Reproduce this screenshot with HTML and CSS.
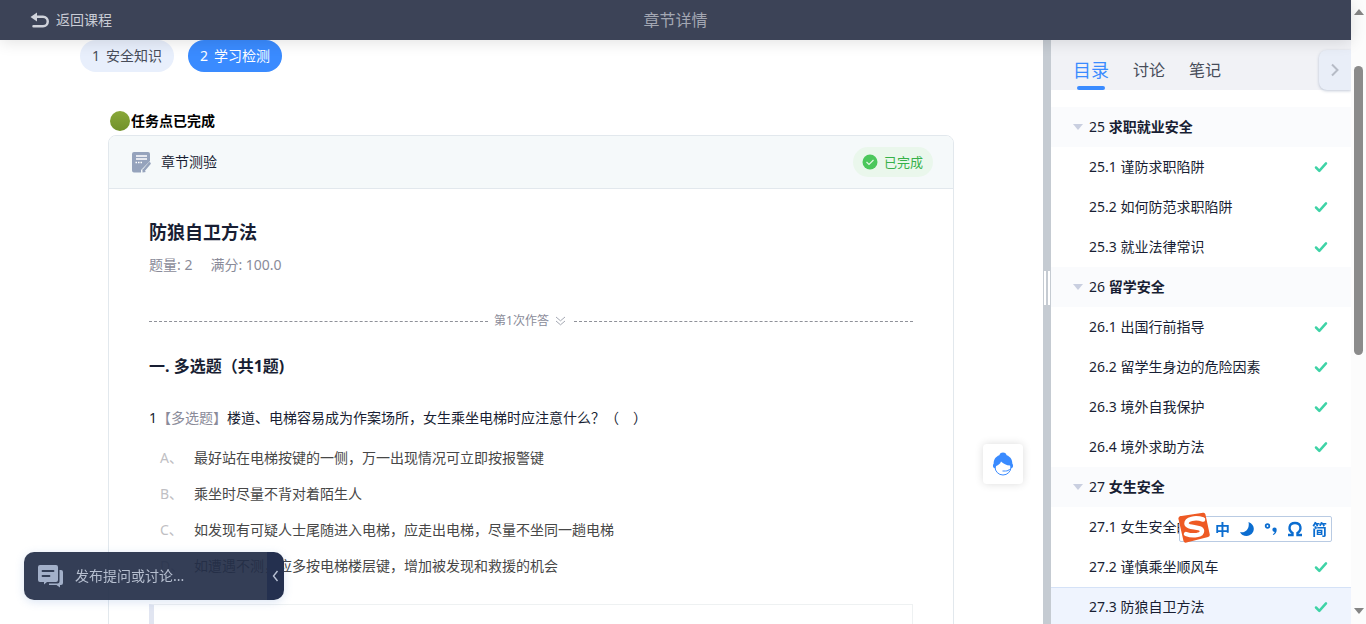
FILE: index.html
```html
<!DOCTYPE html>
<html lang="zh-CN">
<head>
<meta charset="utf-8">
<title>章节详情</title>
<link rel="stylesheet" href="styles.css">
</head>
<body>
<svg class="defs" aria-hidden="true">
  <symbol id="tick" viewBox="0 0 14 12"><path d="M2 6.500 5.300 9.800 12 2.400" fill="none" stroke="#3ed3a6" stroke-width="2.500" stroke-linecap="round" stroke-linejoin="round"/></symbol>
</svg>
<div class="shell">
  <div class="app">
    <header class="topbar">
      <a class="back" href="#">
        <svg width="20" height="16" viewBox="0 0 20 16"><path d="M0.500 5 7 0.500v3h6a6 6 0 0 1 0 12H3.500a1.200 1.200 0 0 1 0-2.500H13a3.500 3.500 0 0 0 0-7H7v3.500z" fill="#d0d3db"/></svg>
        <span>返回课程</span>
      </a>
      <h1 class="topbar-title">章节详情</h1>
    </header>
    <div class="body">
      <main class="content">
        <nav class="steps">
          <a class="step" href="#"><span>1</span><span>安全知识</span></a>
          <a class="step step-active" href="#"><span>2</span><span>学习检测</span></a>
        </nav>
        <div class="task">
          <div class="task-state"><i class="dot"></i>任务点已完成</div>
          <section class="card">
            <div class="card-head">
              <svg width="20" height="21" viewBox="0 0 20 21"><path d="M2 0h14a2 2 0 0 1 2 2v7L9 18v2.500H2a2 2 0 0 1-2-2V2a2 2 0 0 1 2-2z" fill="#95a3bc"/><path d="M4 4h11M4 7h11" stroke="#fff" stroke-width="1.300"/><path d="M3.500 10.500h1.500M6 10.500h1.500M8.500 10.500H10" stroke="#fff" stroke-width="1.500"/><path d="M17.500 11.500 12 18" stroke="#95a3bc" stroke-width="2.600" stroke-linecap="round"/><path d="M10.500 17 14 20 10.500 20.500z" fill="#95a3bc"/></svg>
              <span class="card-name">章节测验</span>
              <span class="badge"><svg width="16" height="16" viewBox="0 0 16 16"><circle cx="8" cy="8" r="7.500" fill="#4cc75c"/><path d="M4.500 8 7 10.500 11.500 6" fill="none" stroke="#e3f7e5" stroke-width="1.200"/></svg>已完成</span>
            </div>
            <div class="paper">
              <h2 class="paper-title">防狼自卫方法</h2>
              <p class="paper-meta"><span>题量: 2</span><span>满分: 100.0</span></p>
              <div class="attempt"><span>第1次作答</span><svg width="11" height="10" viewBox="0 0 11 10"><path d="M1 1l4.500 3.800L10 1M1 5l4.500 3.800L10 5" fill="none" stroke="#a4a8b3"/></svg></div>
              <h3 class="section-title">一. 多选题（共1题)</h3>
              <p class="question">1<span class="kind">【多选题】</span>楼道、电梯容易成为作案场所，女生乘坐电梯时应注意什么？（　）</p>
              <ul class="options">
                <li><span class="letter">A、</span>最好站在电梯按键的一侧，万一出现情况可立即按报警键</li>
                <li><span class="letter">B、</span>乘坐时尽量不背对着陌生人</li>
                <li><span class="letter">C、</span>如发现有可疑人士尾随进入电梯，应走出电梯，尽量不坐同一趟电梯</li>
                <li><span class="letter">D、</span>如遭遇不测，应多按电梯楼层键，增加被发现和救援的机会</li>
              </ul>
              <div class="answer"></div>
            </div>
          </section>
        </div>
      </main>
      <div class="divider"><i class="grip"></i></div>
      <aside class="side">
        <div class="side-tabs">
          <a class="tab tab-active" href="#">目录</a>
          <a class="tab" href="#">讨论</a>
          <a class="tab" href="#">笔记</a>
          <button class="fold" aria-label="收起"><svg width="10" height="14" viewBox="0 0 10 14"><path d="M2 1.500 7.500 7 2 12.500" fill="none" stroke="#b6bbc6" stroke-width="2"/></svg></button>
        </div>
        <ul class="toc">
          <li class="chapter"><i class="caret"></i><span>25 <b>求职就业安全</b></span></li>
          <li class="lesson"><a href="#">25.1 谨防求职陷阱</a><svg width="14" height="12"><use href="#tick"/></svg></li>
          <li class="lesson"><a href="#">25.2 如何防范求职陷阱</a><svg width="14" height="12"><use href="#tick"/></svg></li>
          <li class="lesson"><a href="#">25.3 就业法律常识</a><svg width="14" height="12"><use href="#tick"/></svg></li>
          <li class="chapter"><i class="caret"></i><span>26 <b>留学安全</b></span></li>
          <li class="lesson"><a href="#">26.1 出国行前指导</a><svg width="14" height="12"><use href="#tick"/></svg></li>
          <li class="lesson"><a href="#">26.2 留学生身边的危险因素</a><svg width="14" height="12"><use href="#tick"/></svg></li>
          <li class="lesson"><a href="#">26.3 境外自我保护</a><svg width="14" height="12"><use href="#tick"/></svg></li>
          <li class="lesson"><a href="#">26.4 境外求助方法</a><svg width="14" height="12"><use href="#tick"/></svg></li>
          <li class="chapter"><i class="caret"></i><span>27 <b>女生安全</b></span></li>
          <li class="lesson"><a href="#">27.1 女生安全的</a><svg width="14" height="12"><use href="#tick"/></svg></li>
          <li class="lesson"><a href="#">27.2 谨慎乘坐顺风车</a><svg width="14" height="12"><use href="#tick"/></svg></li>
          <li class="lesson lesson-current"><a href="#">27.3 防狼自卫方法</a><svg width="14" height="12"><use href="#tick"/></svg></li>
        </ul>
      </aside>
    </div>
  </div>
  <div class="scroll"><i class="arrow-up"></i><i class="thumb"></i><i class="arrow-down"></i></div>
</div>

<button class="helper" aria-label="客服"><svg width="22" height="24" viewBox="0 0 22 24"><path d="M3 12v3a8 8 0 0 0 16 0v-3" fill="#fff" stroke="#3a8bff" stroke-width="1"/><path d="M7.300 3.200C8 1.200 9.300.5 11 .5s3 .7 3.700 2.700C18.500 4.600 20.500 8 20.300 11.500c1 .8 1 3.500 0 4.300l-1.500.6c0-1.400-.2-2.200-.8-3-3.400-.2-6.800-1.600-9-4-.8 2.500-2.700 3.600-4.800 4.500-.5.800-.8 1.500-.8 2.500l-1.700-.6c-1-.8-1-3.500 0-4.300C1.500 8 3.500 4.600 7.300 3.200z" fill="#3a8bff"/><path d="M10.500 19h3c2 0 3.300-.6 4.300-2" fill="none" stroke="#3a8bff"/></svg></button>

<div class="discuss">
  <button class="discuss-open"><svg width="26" height="23" viewBox="0 0 26 23"><path d="M2 0h16a2 2 0 0 1 2 2v13a2 2 0 0 1-2 2H9l-3 2.500V17H2a2 2 0 0 1-2-2V2a2 2 0 0 1 2-2z" fill="#a3b0c9"/><path d="M4.500 6h11M4.500 11h7" stroke="#333e56" stroke-width="1.800" stroke-linecap="round"/><path d="M21.500 5H23a2 2 0 0 1 2 2v11a2 2 0 0 1-2 2h-1v2.500L18.500 20H11v-1.500h8.500a2 2 0 0 0 2-2z" fill="#a3b0c9"/></svg><span>发布提问或讨论...</span></button>
  <button class="discuss-fold" aria-label="收起"><svg width="7" height="12" viewBox="0 0 7 12"><path d="M5.500 1 1.500 6l4 5" fill="none" stroke="#b6bfd2" stroke-width="1.400"/></svg></button>
</div>

<div class="ime">
  <svg class="ime-logo" width="32" height="32" viewBox="0 0 32 32"><path d="M3.500 4 25 .8a2 2 0 0 1 2.400 1.500l4.300 20a2.300 2.300 0 0 1-1.600 2.700L8.500 30.500a2.400 2.400 0 0 1-3-1.500L.6 7.500A2.600 2.600 0 0 1 3.500 4z" fill="#ee5a24"/><path d="M25 7.500C17 5 8.500 7 8.500 11.500c0 5 15.500 2.500 15.500 7.500 0 4.500-9 5.500-16 3" fill="none" stroke="#fff" stroke-width="4.500" stroke-linecap="round"/></svg>
  <span>中</span>
  <svg width="16" height="16" viewBox="0 0 16 16"><path d="M9.500 1C18 4 15.500 15 7.500 15 4.500 15 2 13.500 1 11c5 1.500 10-3 8.500-10z" fill="#0b6dd0"/></svg>
  <svg width="14" height="16" viewBox="0 0 14 16"><circle cx="3.500" cy="5" r="1.800" fill="none" stroke="#0b6dd0" stroke-width="1.800"/><path d="M10.500 6.500a2.200 2.200 0 0 1 2.200 2.300c0 2.500-1.200 4.500-3.500 5.200l-.4-.9c1.200-.6 1.700-1.300 1.800-2.200a2.200 2.200 0 0 1-.1-4.400z" fill="#0b6dd0"/></svg>
  <svg width="16" height="16" viewBox="0 0 16 16"><path d="M1 14h4.500v-2C1 9 1.500 2 8 2s7 7 2.500 10v2H15" fill="none" stroke="#0b6dd0" stroke-width="2.400"/></svg>
  <span>简</span>
</div>
</body>
</html>
```
FILE: styles.css
```css
* { box-sizing: border-box; }
body, h1, h2, h3, p, ul { margin: 0; padding: 0; }
ul { list-style: none; }
a { color: inherit; text-decoration: none; }
button { border: 0; padding: 0; font: inherit; color: inherit; cursor: pointer; }
svg { flex: none; display: block; }
body {
  font-family: "Noto Sans", "Noto Sans CJK SC", sans-serif;
  font-size: 14px;
  line-height: 20px;
  color: #181e33;
  background: #fff;
  overflow: hidden;
}
.defs { position: absolute; width: 0; height: 0; }
.shell { display: flex; height: 100vh; }
.app { flex: 1; min-width: 0; display: flex; flex-direction: column; }

.topbar {
  position: relative;
  z-index: 2;
  flex: none;
  height: 40px;
  display: grid;
  grid-template-columns: 1fr auto 1fr;
  align-items: center;
  padding: 0 30px;
  background: #3c4357;
  box-shadow: 0 2px 16px rgba(0, 0, 0, .12);
}
.back { display: flex; align-items: center; gap: 6px; color: #c9ccd5; }
.topbar-title { font-size: 16px; font-weight: 400; color: #a3a7b3; }

.body { flex: 1; min-height: 0; display: flex; }
.content { flex: 1; min-width: 0; overflow: hidden; }
.steps { display: flex; gap: 14px; padding-left: 80px; }
.step {
  display: flex;
  gap: 6px;
  padding: 6px 12px;
  border-radius: 16px;
  background: #e8effc;
  color: #474c59;
}
.step-active { background: #3a8bff; color: #fff; }

.task { padding: 39px 89px 0 108px; }
.task-state { display: flex; align-items: center; padding-left: 2px; font-weight: 700; color: #000; }
.dot { width: 20px; height: 20px; margin-right: 1px; border-radius: 50%; background: linear-gradient(#89a83a, #71912a); }
.card { margin-top: 4px; border: 1px solid #e2e8ed; border-radius: 8px; overflow: hidden; }
.card-head {
  display: flex;
  align-items: center;
  height: 53px;
  padding: 0 20px 0 23px;
  background: #f5f9fa;
  border-bottom: 1px solid #e2e8ed;
}
.card-name { margin-left: 9px; }
.badge {
  display: flex;
  align-items: center;
  gap: 6px;
  margin-left: auto;
  padding: 5px 10px 5px 9px;
  border-radius: 15px;
  background: #eaf7ec;
  color: #36b249;
  font-size: 13px;
}
.paper { padding: 29px 40px 0; }
.paper-title { font-size: 18px; line-height: 28px; font-weight: 700; }
.paper-meta { display: flex; gap: 18px; margin-top: 9px; color: #8a8b99; }
.attempt {
  display: flex;
  align-items: center;
  gap: 6px;
  margin-top: 36px;
  font-size: 12px;
  color: #8a8b99;
}
.attempt::before, .attempt::after { content: ""; flex: 1; border-top: 1px dashed #8f9199; }
.attempt::after { margin-left: 2px; }
.section-title { margin-top: 23px; font-size: 16px; line-height: 24px; font-weight: 700; }
.question { margin-top: 28px; line-height: 24px; }
.kind { color: #8a8b99; }
.options { margin-top: 10px; line-height: 36px; color: #474747; }
.options li { display: flex; }
.letter { width: 45px; padding-left: 11px; color: #bfbfc4; }
.answer { height: 80px; margin-top: 20px; border: 1px solid #eef1f2; border-left: 5px solid #e1e5f1; }

.divider { flex: none; width: 8px; display: flex; background: #c5cbd2; }
.grip { width: 8px; height: 34px; margin-top: 231px; background: linear-gradient(90deg, #c5cbd2 1px, #fff 1px 3px, #c5cbd2 3px 5px, #fff 5px 7px, #c5cbd2 7px); }

.side { flex: none; width: 300px; overflow: hidden; }
.side-tabs { display: flex; align-items: flex-start; gap: 24px; height: 50px; padding-left: 22px; background: #f1f2f6; }
.tab { position: relative; margin-top: 10px; font-size: 16px; line-height: 40px; color: #474c59; }
.tab-active { font-size: 18px; color: #3a8bff; }
.tab-active::after { content: ""; position: absolute; left: 4px; right: 4px; bottom: 0; height: 4px; border-radius: 2px; background: #3a8bff; }
.fold {
  display: flex;
  align-items: center;
  width: 32px;
  height: 40px;
  margin: 10px 0 0 auto;
  padding-left: 11px;
  border-radius: 8px 0 0 8px;
  background: #e9eef8;
  box-shadow: 0 1px 3px rgba(80, 100, 140, .35);
}
.toc { padding-top: 17px; }
.chapter, .lesson { display: flex; align-items: center; height: 40px; }
.chapter { padding-left: 22px; gap: 8px; background: #fafbfd; }
.caret { border: solid transparent; border-width: 6px 5px 0; border-top-color: #c9cfe0; margin-right: -2px; }
.lesson { justify-content: space-between; padding: 0 23px 0 38px; }
.lesson-current { background: #eff4fe; box-shadow: inset 0 1px #d5e2f7; }

.scroll { flex: none; width: 15px; display: flex; flex-direction: column; align-items: center; padding: 9px 0 10px; background: #fcfcfc; }
.arrow-up, .arrow-down { border: solid transparent; }
.arrow-up { border-width: 0 5px 6px; border-bottom-color: #858585; }
.thumb { width: 9px; height: 289px; margin-top: 51px; border-radius: 5px; background: #8b8b8b; }
.arrow-down { margin-top: auto; border-width: 6px 5px 0; border-top-color: #858585; }

.helper {
  position: fixed;
  right: 343px;
  bottom: 140px;
  display: grid;
  place-items: center;
  width: 40px;
  height: 40px;
  border-radius: 4px;
  background: #fff;
  box-shadow: 0 0 8px rgba(0, 0, 0, .14);
}
.discuss {
  position: fixed;
  left: 24px;
  bottom: 24px;
  display: flex;
  width: 260px;
  height: 48px;
  border-radius: 10px;
  overflow: hidden;
  box-shadow: 0 2px 10px rgba(80, 130, 200, .2);
}
.discuss-open { flex: 1; display: flex; align-items: center; gap: 11px; padding-left: 14px; background: rgba(35, 46, 72, .92); color: #b6bfd0; }
.discuss-fold { width: 17px; display: grid; place-items: center; background: #24304f; }
.ime {
  position: fixed;
  right: 34px;
  bottom: 82px;
  display: flex;
  align-items: center;
  justify-content: space-between;
  width: 153px;
  height: 26px;
  padding: 0 4px 0 35px;
  border: 1px solid #b9cbe3;
  border-radius: 2px;
  background: #fff;
  background-clip: padding-box;
  color: #0b6dd0;
  font-size: 15px;
  font-weight: 700;
  clip-path: inset(-5px -1px -5px -5px);
}
.ime-logo { position: absolute; left: -2px; top: -5px; }
```
